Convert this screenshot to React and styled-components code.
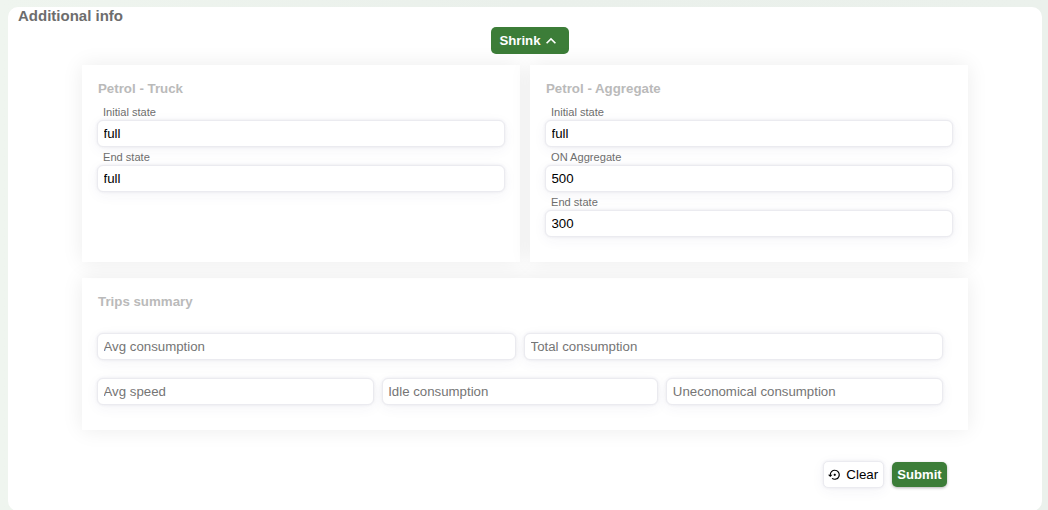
import React from "react";
import styled, { createGlobalStyle } from "styled-components";
import { MdKeyboardArrowUp, MdSettingsBackupRestore } from "react-icons/md";

const GlobalStyle = createGlobalStyle`
  * { box-sizing: border-box; }
  body {
    margin: 0;
    overflow: hidden;
    background: #ebf1eb;
    font-family: "Liberation Sans", Arial, sans-serif;
  }
`;

const Page = styled.main`
  height: 510px;
  padding: 7px 6px 0 8px;
  background: linear-gradient(90deg, #eff5ef, #eaf0eb 50%, #ebf1ec);
`;

const Sheet = styled.section`
  height: 504px;
  background: #fff;
  border-radius: 10px;
  display: flex;
  flex-direction: column;
`;

const Title = styled.h1`
  margin: 0 0 0 10px;
  height: 20px;
  font-size: 15px;
  line-height: 18px;
  color: #6d6d6d;
`;

const Button = styled.button`
  display: inline-flex;
  align-items: center;
  justify-content: center;
  padding: 0;
  border: 0;
  border-radius: 5px;
  font-family: inherit;
  font-size: 13.333px;
  cursor: pointer;
`;

const ShrinkButton = styled(Button)`
  align-self: center;
  width: 78px;
  height: 27px;
  margin-left: 10px;
  font-size: 13.2px;
  font-weight: 700;
  color: #fff;
  background: #3c7d38;
`;

const Form = styled.form`
  width: 886px;
  margin: 11px 0 0 74px;
`;

const Panels = styled.div`
  display: grid;
  grid-template-columns: 1fr 1fr;
  gap: 10px;
  margin-bottom: 16px;
`;

const Panel = styled.section`
  height: ${(p) => p.$height}px;
  padding: 15px 15px 0;
  background: #fff;
  box-shadow: 0 0 20px rgba(0, 0, 0, 0.08);
`;

const PanelTitle = styled.h2`
  margin: 0 0 0 1px;
  font-size: 13.3px;
  line-height: 17px;
  height: 25px;
  color: #bababa;
`;

const FieldList = styled.div`
  display: flex;
  flex-direction: column;
  margin-top: -3px;
`;

const Field = styled.label`
  display: block;
  height: 45px;
`;

const Label = styled.span`
  display: block;
  height: 18px;
  padding-left: 6px;
  font-size: 11.1px;
  line-height: 20px;
  color: #6d6d6d;
`;

const Input = styled.input`
  display: block;
  width: 100%;
  height: 27px;
  padding: 0 5.5px;
  border: 1px solid #ebebf0;
  border-radius: 6px;
  outline: 0;
  background: #fff;
  box-shadow: 0 0 3px rgba(60, 60, 110, 0.1), 0 3px 14px rgba(60, 60, 110, 0.05);
  font-family: inherit;
  font-size: 13.25px;
  color: #000;
  &::placeholder { color: #757575; opacity: 1; }
`;

const SummaryRow = styled.div`
  display: grid;
  grid-template-columns: repeat(${(p) => p.$columns}, 1fr);
  gap: 8px;
  width: 846px;
  margin-top: ${(p) => p.$top}px;
`;

const Actions = styled.div`
  display: flex;
  align-items: center;
  gap: 8px;
  justify-content: flex-end;
  margin: 31px 21px 0 0;
`;

const ClearButton = styled(Button)`
  width: 61px;
  height: 27px;
  gap: 5px;
  padding-right: 1px;
  border: 1px solid #ebebf0;
  color: #000;
  background: #fff;
  box-shadow: 0 0 3px rgba(60, 60, 110, 0.1), 0 3px 14px rgba(60, 60, 110, 0.05);
`;

const SubmitButton = styled(Button)`
  width: 55px;
  height: 25px;
  font-size: 13.1px;
  font-weight: 700;
  color: #fff;
  background: #3c7d38;
  box-shadow: 0 1px 3px rgba(0, 0, 0, 0.3);
`;

const fuelPanels = [
  { title: "Petrol - Truck", fields: [["Initial state", "full"], ["End state", "full"]] },
  {
    title: "Petrol - Aggregate",
    fields: [["Initial state", "full"], ["ON Aggregate", "500"], ["End state", "300"]],
  },
];

const summaryRows = [
  ["Avg consumption", "Total consumption"],
  ["Avg speed", "Idle consumption", "Uneconomical consumption"],
];

export default function App() {
  return (
    <Page>
      <GlobalStyle />
      <Sheet>
        <Title>Additional info</Title>
        <ShrinkButton type="button">
          Shrink <MdKeyboardArrowUp size={20} />
        </ShrinkButton>
        <Form>
          <Panels>
            {fuelPanels.map(({ title, fields }) => (
              <Panel key={title} $height={197}>
                <PanelTitle>{title}</PanelTitle>
                <FieldList>
                  {fields.map(([label, value]) => (
                    <Field key={label}>
                      <Label>{label}</Label>
                      <Input defaultValue={value} />
                    </Field>
                  ))}
                </FieldList>
              </Panel>
            ))}
          </Panels>
          <Panel $height={152}>
            <PanelTitle>Trips summary</PanelTitle>
            {summaryRows.map((names, i) => (
              <SummaryRow key={names[0]} $columns={names.length} $top={i ? 18 : 15}>
                {names.map((name) => (
                  <Input key={name} placeholder={name} />
                ))}
              </SummaryRow>
            ))}
          </Panel>
          <Actions>
            <ClearButton type="button">
              <MdSettingsBackupRestore size={13.5} /> Clear
            </ClearButton>
            <SubmitButton type="button">Submit</SubmitButton>
          </Actions>
        </Form>
      </Sheet>
    </Page>
  );
}
